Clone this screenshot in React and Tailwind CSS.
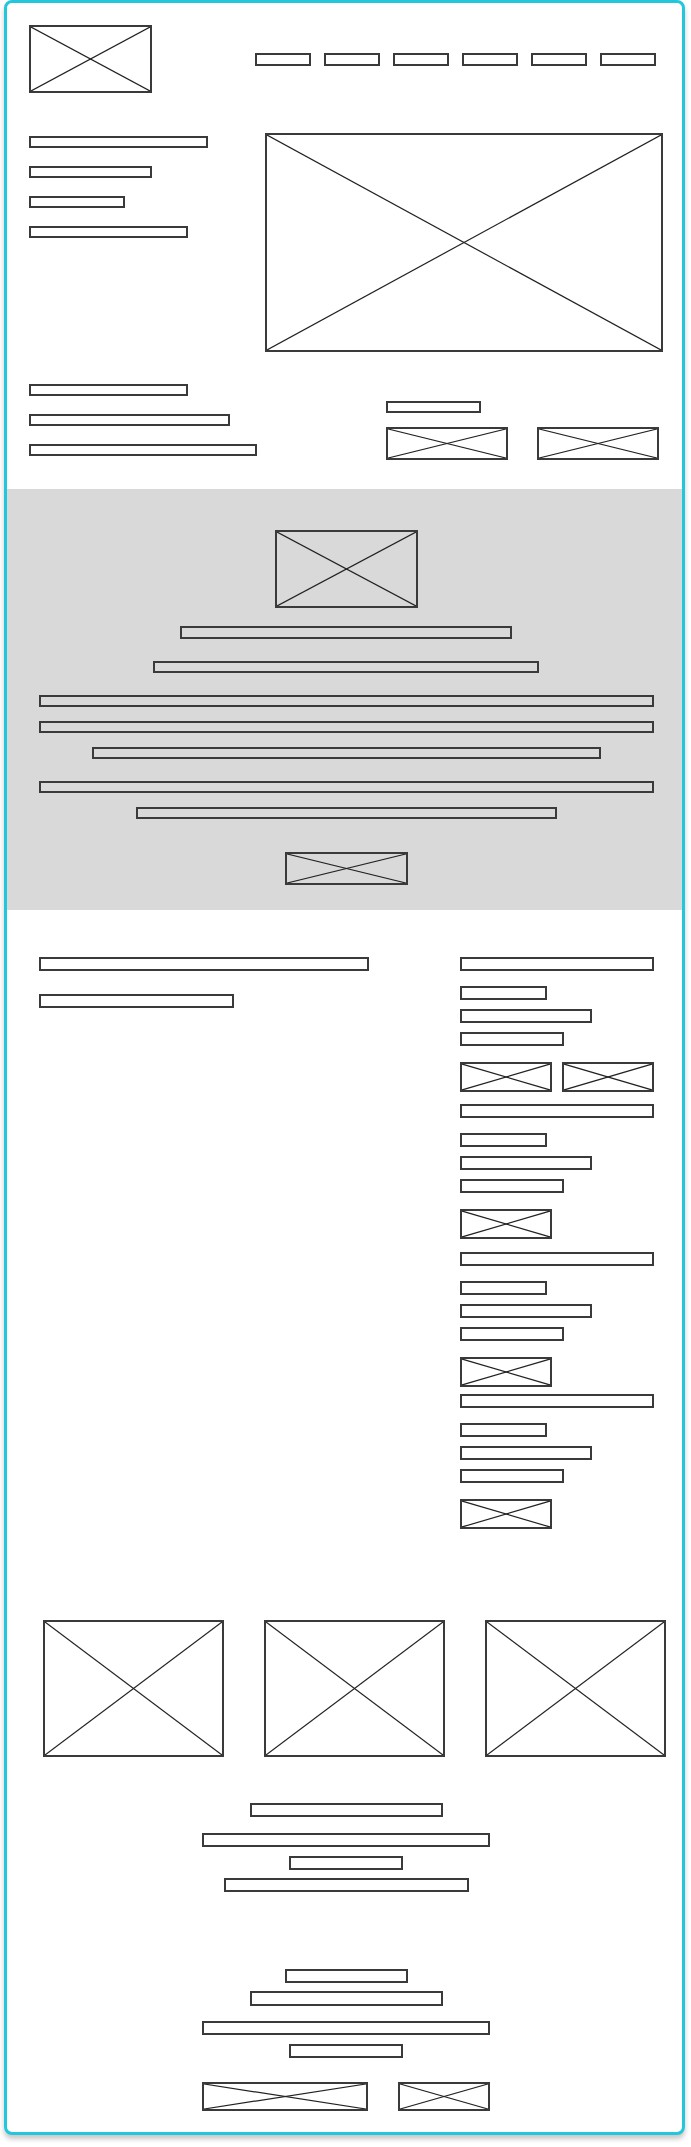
const Bar = ({ w, h = 12, className = '' }) => (
  <div className={`shrink-0 border-2 border-[#3a3a3a] bg-white ${className}`} style={{ width: w, height: h }} />
);

const ImgX = ({ w, h, className = '', fill = 'bg-white' }) => (
  <div className={`shrink-0 border-2 border-[#3a3a3a] ${fill} ${className}`} style={{ width: w, height: h }}>
    <svg className="block h-full w-full" viewBox="0 0 100 100" preserveAspectRatio="none">
      <line x1="0" y1="0" x2="100" y2="100" stroke="#222" strokeWidth="1.2" vectorEffect="non-scaling-stroke" />
      <line x1="100" y1="0" x2="0" y2="100" stroke="#222" strokeWidth="1.2" vectorEffect="non-scaling-stroke" />
    </svg>
  </div>
);

function Header() {
  return (
    <div className="flex items-start pt-[22px] pl-[22px] pr-[26px]">
      <ImgX w={123} h={68} />
      <nav className="ml-auto mt-[28px] flex gap-[13px]">
        {[0, 1, 2, 3, 4, 5].map((i) => (
          <Bar key={i} w={56} h={13} />
        ))}
      </nav>
    </div>
  );
}

function Hero() {
  return (
    <>
      <div className="mt-[40px] flex items-start justify-between pl-[22px] pr-[19px]">
        <div className="flex flex-col gap-[18px] pt-[3px]">
          <Bar w={179} />
          <Bar w={123} />
          <Bar w={96} />
          <Bar w={159} />
        </div>
        <ImgX w={398} h={219} />
      </div>

      <div className="mt-[32px] flex items-start pl-[22px]">
        <div className="flex w-[357px] flex-col gap-[18px]">
          <Bar w={159} />
          <Bar w={201} />
          <Bar w={228} />
        </div>
        <div className="flex flex-col">
          <Bar w={95} className="mt-[17px]" />
          <div className="mt-[14px] flex gap-[29px]">
            <ImgX w={122} h={33} />
            <ImgX w={122} h={33} />
          </div>
        </div>
      </div>
    </>
  );
}

function Feature() {
  return (
    <section className="mt-[29px] flex h-[421px] flex-col items-center bg-[#d9d9d9] pt-[41px] pl-[3px]">
      <ImgX w={143} h={78} fill="bg-[#d9d9d9]" />
      <Bar w={332} h={13} className="mt-[18px] !bg-[#d9d9d9]" />
      <Bar w={386} className="mt-[22px] !bg-[#d9d9d9]" />
      <Bar w={615} className="mt-[22px] !bg-[#d9d9d9]" />
      <Bar w={615} className="mt-[14px] !bg-[#d9d9d9]" />
      <Bar w={509} className="mt-[14px] !bg-[#d9d9d9]" />
      <Bar w={615} className="mt-[22px] !bg-[#d9d9d9]" />
      <Bar w={421} className="mt-[14px] !bg-[#d9d9d9]" />
      <ImgX w={123} h={33} className="mt-[33px]" fill="bg-[#d9d9d9]" />
    </section>
  );
}

function SideGroup({ pair, className = '' }) {
  return (
    <div className={`flex flex-col ${className}`}>
      <Bar w={194} h={14} />
      <Bar w={87} h={14} className="mt-[15px]" />
      <Bar w={132} h={14} className="mt-[9px]" />
      <Bar w={104} h={14} className="mt-[9px]" />
      <div className="mt-[16px] flex gap-[10px]">
        <ImgX w={92} h={30} />
        {pair && <ImgX w={92} h={30} />}
      </div>
    </div>
  );
}

function Content() {
  return (
    <div className="mt-[47px] flex items-start pl-[32px]">
      <div className="flex w-[421px] flex-col">
        <Bar w={330} h={14} />
        <Bar w={195} h={14} className="mt-[23px]" />
      </div>
      <div className="flex flex-col">
        <SideGroup pair />
        <SideGroup className="mt-[12px]" />
        <SideGroup className="mt-[13px]" />
        <SideGroup className="mt-[7px]" />
      </div>
    </div>
  );
}

function Gallery() {
  return (
    <>
      <div className="mt-[91px] flex gap-[40px] pl-[36px]">
        <ImgX w={181} h={137} />
        <ImgX w={181} h={137} />
        <ImgX w={181} h={137} />
      </div>
      <div className="mt-[46px] flex flex-col items-center pl-[3px]">
        <Bar w={193} h={14} />
        <Bar w={288} h={14} className="mt-[16px]" />
        <Bar w={114} h={14} className="mt-[9px]" />
        <Bar w={245} h={14} className="mt-[8px]" />
      </div>
    </>
  );
}

function Footer() {
  return (
    <footer className="mt-[77px] flex flex-col items-center pl-[3px]">
      <Bar w={123} h={14} />
      <Bar w={193} h={15} className="mt-[8px]" />
      <Bar w={288} h={14} className="mt-[15px]" />
      <Bar w={114} h={14} className="mt-[9px]" />
      <div className="mt-[24px] flex gap-[30px]">
        <ImgX w={166} h={29} />
        <ImgX w={92} h={29} />
      </div>
    </footer>
  );
}

export default function App() {
  return (
    <div className="min-h-[2147px] w-full bg-white pl-[4px]">
      <div className="h-[2135px] w-[681px] overflow-hidden rounded-lg border-[3px] border-[#22c7dc] bg-white shadow-[0_4px_5px_rgba(0,0,0,0.22)]">
        <Header />
        <Hero />
        <Feature />
        <Content />
        <Gallery />
        <Footer />
      </div>
    </div>
  );
}
